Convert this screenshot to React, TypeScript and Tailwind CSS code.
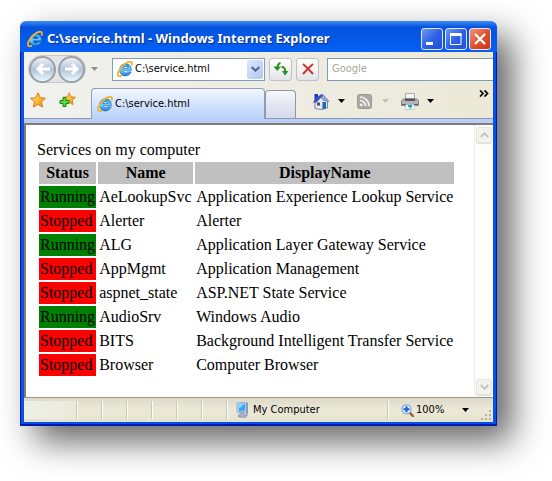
import type { ReactNode } from 'react';

type Service = { status: 'Running' | 'Stopped'; name: string; display: string };

const services: Service[] = [
  { status: 'Running', name: 'AeLookupSvc', display: 'Application Experience Lookup Service' },
  { status: 'Stopped', name: 'Alerter', display: 'Alerter' },
  { status: 'Running', name: 'ALG', display: 'Application Layer Gateway Service' },
  { status: 'Stopped', name: 'AppMgmt', display: 'Application Management' },
  { status: 'Stopped', name: 'aspnet_state', display: 'ASP.NET State Service' },
  { status: 'Running', name: 'AudioSrv', display: 'Windows Audio' },
  { status: 'Stopped', name: 'BITS', display: 'Background Intelligent Transfer Service' },
  { status: 'Stopped', name: 'Browser', display: 'Computer Browser' },
];

function IeLogo() {
  return (
    <svg className="size-4 shrink-0" viewBox="0 0 16 16" aria-hidden="true">
      <defs>
        <linearGradient id="ie" x1="0" y1="0" x2="0" y2="1">
          <stop offset="0" stopColor="#2f93e6" />
          <stop offset=".55" stopColor="#6fd0fb" />
          <stop offset="1" stopColor="#1d78d4" />
        </linearGradient>
      </defs>
      <path
        d="M14.400 9.800H6.300c.1 1.400 1 2.100 2.300 2.100.9 0 1.600-.3 2-.9h3.500c-.7 2.300-2.800 3.900-5.600 3.900-3.500 0-5.900-2.500-5.900-6 0-3.500 2.500-6.100 6-6.100 3.600 0 5.900 2.600 5.800 7zM6.300 7.400h4.600C10.700 6.200 9.900 5.500 8.600 5.500S6.500 6.200 6.300 7.400z"
        fill="url(#ie)"
        stroke="#1263b8"
        strokeWidth=".6"
      />
      <path
        d="M14.400 4.700c.9-2.100.7-3.600-.6-3.900C11.300.3 6.700 3 3.600 7.300.8 11.100.2 14.500 1.800 15.200c.8.3 1.900 0 3.200-.8"
        fill="none"
        stroke="#f3b32a"
        strokeWidth="1.800"
      />
    </svg>
  );
}

function Arrow({ className }: { className: string }) {
  return (
    <svg className={'h-1 w-[7px] shrink-0 ' + className} viewBox="0 0 7 4" aria-hidden="true">
      <path d="M0 0h7L3.500 4z" fill="currentColor" />
    </svg>
  );
}

function NavButton({ label, path }: { label: string; path: string }) {
  return (
    <button aria-label={label} className="flex size-[27px] items-center justify-center rounded-full border-2 border-[#9aa0a8] bg-linear-to-b from-[#eef2f6] via-[#b4c4d6] to-[#e9f8ff]">
      <svg className="h-3.5 w-4 shrink-0" viewBox="0 0 16 14" fill="none" stroke="#fff" strokeWidth="3" aria-hidden="true">
        <path d={path} />
      </svg>
    </button>
  );
}

function NavButtons() {
  return (
    <div className="flex h-7 w-[58px] shrink-0 items-center justify-between rounded-full border border-[#c9c9c9] bg-[#e3e4e5]">
      <NavButton label="Back" path="M15 7H3M8 2 3 7 8 12" />
      <NavButton label="Forward" path="M1 7h12M8 2 13 7 8 12" />
    </div>
  );
}

function CaptionButton({ label, tone, children }: { label: string; tone: string; children: ReactNode }) {
  return (
    <button aria-label={label} className={'size-[22px] rounded-[3px] border border-[#dfe7fb] ' + tone}>
      <svg className="size-5" viewBox="0 0 20 20" fill="none" aria-hidden="true">
        {children}
      </svg>
    </button>
  );
}

function ToolButton({ label, children }: { label: string; children: ReactNode }) {
  return (
    <button aria-label={label} className="flex size-[23px] shrink-0 items-center justify-center rounded-[3px] border border-[#bdbfca] bg-linear-to-b from-white via-[#f4f3f0] to-[#e2e2ea]">
      {children}
    </button>
  );
}

const starPath = 'M8 .8l2.200 4.900 5.200.6-3.900 3.500 1.100 5.200L8 12.400 3.400 15l1.100-5.200L.6 6.300l5.200-.6z';

function Star({ plus }: { plus?: boolean }) {
  return (
    <svg className="h-4 w-[17px]" viewBox="0 0 17 16" aria-hidden="true">
      <defs>
        <linearGradient id="star" x1="0" y1="0" x2="1" y2="1">
          <stop offset="0" stopColor="#fff0a0" />
          <stop offset=".5" stopColor="#fdbb35" />
          <stop offset="1" stopColor="#f08a10" />
        </linearGradient>
      </defs>
      <path
        d={starPath}
        fill="url(#star)"
        stroke="#cf7c18"
        strokeLinejoin="round"
        transform={plus ? 'translate(3.500 0) scale(.84)' : undefined}
      />
      {plus && (
        <path d="M4 5.500h3V8.500h3v3H7v3H4v-3H1v-3h3z" fill="#5ad83a" stroke="#16880f" strokeLinejoin="round" />
      )}
    </svg>
  );
}

function HomeIcon() {
  return (
    <svg className="h-[17px] w-[18px]" viewBox="0 0 18 17" aria-hidden="true">
      <path d="M3 8v7.500l6 1 6.500-1.500V8L11 3z" fill="#e6e9f2" stroke="#7d86a3" />
      <path d="M2.500 1h3.500V4L2.500 8z" fill="#2437b8" />
      <path d="M11 1.500 17 8.500 11.500 7.500 9 4z" fill="#9aa9cc" stroke="#6677a8" strokeWidth=".7" />
      <path d="M.8 9.500 5 4 9.500 1 11 2.500 4.500 9.500z" fill="#3a52c4" />
      <path d="M10.500 9h3.500v6.500l-3.500.7z" fill="#1967b7" />
      <path d="M5 9.500h3v3H5z" fill="#4b5058" />
    </svg>
  );
}

function FeedIcon() {
  return (
    <svg className="h-[15px] w-[15px]" viewBox="0 0 15 15" aria-hidden="true">
      <rect x=".5" y=".5" width="14" height="14" rx="2" fill="#aaa9a5" stroke="#989793" />
      <g fill="none" stroke="#f5f4ef" strokeWidth="1.600">
        <path d="M3 6.500A5.500 5.500 0 0 1 8.500 12M3 3a9 9 0 0 1 9 9" />
      </g>
      <circle cx="4.300" cy="10.800" r="1.400" fill="#f5f4ef" />
    </svg>
  );
}

function PrinterIcon() {
  return (
    <svg className="h-[17px] w-[18px]" viewBox="0 0 18 17" aria-hidden="true">
      <path d="M4.500.5h9V7h-9z" fill="#f4f4f4" stroke="#aaa" />
      <path d="M2 6h14l1.500 2v4.500H.5V8z" fill="#b3b5b9" stroke="#85878c" />
      <path d="M4 5.500h10v2.500H4z" fill="#54565c" />
      <path d="M1 11.500h16" stroke="#63656a" />
      <path d="M5 11.500h8l.5 5h-9z" fill="#f6fafd" stroke="#b4bec8" strokeWidth=".7" />
      <path d="M7 12h4v2H7z" fill="#259bdc" />
      <path d="M8.500 14h2v1.500h-2z" fill="#4db36b" />
    </svg>
  );
}

function ComputerIcon() {
  return (
    <svg className="h-4 w-[13px]" viewBox="0 0 13 16" aria-hidden="true">
      <path d="M10 1.500 12 .5v11l-2 1.500z" fill="#8a96bb" />
      <path d="M1 1 10.500 0v9.500L2.500 11 1 10z" fill="#cfdcf4" stroke="#7795cf" strokeWidth=".7" />
      <path d="M2.200 2 9.300 1.200v7.300L2.800 9.700z" fill="#3ca6f3" />
      <path d="M2.200 2 9.300 1.200 2.600 7z" fill="#8bd4fc" />
      <path d="m5 10.500 3-.5v2.500l3.500.5-2 2.500-7-.5v-2l2.500-.5z" fill="#aab1cb" stroke="#7d84a6" strokeWidth=".6" />
    </svg>
  );
}

function MagnifierIcon() {
  return (
    <svg className="size-[13px]" viewBox="0 0 13 13" aria-hidden="true">
      <path d="m8 8 4 4" stroke="#9a5636" strokeWidth="2.400" strokeLinecap="round" />
      <circle cx="5.500" cy="5.300" r="4.600" fill="#dbeeff" stroke="#8ba8d2" strokeWidth="1.200" />
      <path d="M5.500 2.300v6M2.500 5.300h6" stroke="#1261d4" strokeWidth="2" />
    </svg>
  );
}

function ScrollButton({ up }: { up?: boolean }) {
  return (
    <button aria-label={up ? 'Scroll up' : 'Scroll down'} className="flex size-4 shrink-0 items-center justify-center rounded-[3px] border border-[#e6e5df] bg-[#f3f2ee] shadow-[0_1px_1px_#dcdcd2]">
      <svg className="h-1.5 w-[9px]" viewBox="0 0 9 6" fill="none" stroke="#c4c3bd" strokeWidth="2" aria-hidden="true">
        <path d={up ? 'M.7 5 4.500 1.300 8.300 5' : 'M.7 1l3.800 3.700L8.300 1'} />
      </svg>
    </button>
  );
}

function TitleBar() {
  return (
    <header className="flex h-[31px] items-center rounded-t-[6px] bg-linear-to-b from-[#3c8cf5] from-0% via-[#0553dd] via-20% to-[#0560f4] pt-1 pr-1.5 pl-[7px]">
      <IeLogo />
      <h1 className="ml-1 flex-1 truncate font-['Noto_Sans',sans-serif] text-[13px] font-bold text-white [text-shadow:1px_1px_1px_#0a2d8c]">
        C:\service.html - Windows Internet Explorer
      </h1>
      <div className="flex gap-0.5">
        <CaptionButton label="Minimize" tone="bg-linear-to-br from-[#6f98f3] via-[#2f62e4] to-[#1c4fd8]">
          <path d="M4 14.500h7" stroke="#fff" strokeWidth="3" />
        </CaptionButton>
        <CaptionButton label="Maximize" tone="bg-linear-to-br from-[#6f98f3] via-[#2f62e4] to-[#1c4fd8]">
          <path d="M4.500 5v10.500h10.500V5z" stroke="#fff" />
          <path d="M4 5.500h11.500" stroke="#fff" strokeWidth="3" />
        </CaptionButton>
        <CaptionButton label="Close" tone="bg-linear-to-br from-[#ee9376] via-[#e2512f] to-[#cb3410]">
          <path d="m5 5 10 10M15 5 5 15" stroke="#fff" strokeWidth="2.400" />
        </CaptionButton>
      </div>
    </header>
  );
}

function NavigationBar() {
  return (
    <div className="flex h-[34px] items-center pl-1">
      <NavButtons />
      <Arrow className="ml-[5px] text-[#8f8f8f]" />
      <div className="ml-3.5 flex h-[23px] w-[153px] shrink-0 items-center border border-[#7f9db9] bg-white pl-1">
        <IeLogo />
        <input aria-label="Address" defaultValue="C:\service.html" className="ml-0.5 h-5 w-0 flex-1 bg-transparent leading-5 outline-none" />
        <button aria-label="Show addresses" className="m-px flex h-[19px] w-4 items-center justify-center rounded-[2px] bg-linear-to-br from-[#dce7fd] to-[#b0c8f5]">
          <svg className="h-1.5 w-[9px]" viewBox="0 0 9 6" fill="none" stroke="#4d6185" strokeWidth="2" aria-hidden="true">
            <path d="m.7 1 3.800 3.700L8.300 1" />
          </svg>
        </button>
      </div>
      <div className="mx-1 flex gap-1">
        <ToolButton label="Refresh">
          <svg className="h-3.5 w-4" viewBox="0 0 16 14" fill="none" stroke="#279222" strokeWidth="2" aria-hidden="true">
            <path d="M7.500 1C5.500 1.500 4.500 3 4.500 6M8.500 5c2.500-.3 3.500 1.500 3.500 3v4.500" />
            <path d="M.5 4.500h7.500L4.300 9zM9 9h6.500l-3.500 4.500z" fill="#279222" stroke="none" />
          </svg>
        </ToolButton>
        <ToolButton label="Stop">
          <svg className="size-3" viewBox="0 0 12 12" fill="none" stroke="#cf3434" strokeWidth="2" aria-hidden="true">
            <path d="M1 1c3 2.500 7 6.500 10 10M11 1C8 3.500 4 7.500 1 11" />
          </svg>
        </ToolButton>
      </div>
      <div className="ml-1 flex h-[23px] flex-1 items-center border-y border-l border-[#7f9db9] bg-white pl-1">
        <input aria-label="Search" placeholder="Google" className="h-5 w-0 flex-1 bg-transparent leading-5 outline-none placeholder:text-[#aaa899]" />
      </div>
    </div>
  );
}

function TabBar() {
  return (
    <div className="flex h-[33px] border-b border-[#8f9aaa] pl-1.5">
      <div className="flex w-[61px] shrink-0 items-center gap-3 pb-1">
        <button aria-label="Favorites"><Star /></button>
        <button aria-label="Add to favorites"><Star plus /></button>
      </div>
      <div className="flex items-end" role="tablist">
        <button role="tab" aria-selected="true" className="-mb-px flex h-[31px] w-[174px] items-center rounded-t-[4px] border border-b-0 border-[#8f9db8] bg-linear-to-b from-[#f2f7ff] via-[#d3e3fc] to-[#b9d1fa] pl-[5px]">
          <IeLogo />
          <span className="ml-0.5">C:\service.html</span>
        </button>
        <button aria-label="New tab" role="tab" aria-selected="false" className="h-7 w-[31px] rounded-t-[4px] border border-b-0 border-[#9296a8] bg-linear-to-b from-[#f8f8fb] via-[#e3e6f1] to-[#d5daeb]" />
      </div>
      <div className="ml-4 flex flex-1 items-center pb-0.5">
        <button aria-label="Home" className="flex items-center gap-2"><HomeIcon /><Arrow className="text-black" /></button>
        <button aria-label="Feeds" className="ml-3 flex items-center gap-2.5"><FeedIcon /><Arrow className="text-[#c5c2b5]" /></button>
        <button aria-label="Print" className="ml-3 flex items-center gap-2"><PrinterIcon /><Arrow className="text-black" /></button>
        <button aria-label="More tools" className="mr-1 mb-4 ml-auto">
          <svg className="h-[7px] w-[10px]" viewBox="0 0 10 7" fill="none" stroke="#000" strokeWidth="1.700" aria-hidden="true">
            <path d="m1 .5 3 3-3 3M5.500.5l3 3-3 3" />
          </svg>
        </button>
      </div>
    </div>
  );
}

function StatusBar() {
  return (
    <footer className="flex h-[25px] items-center border-t border-[#98968a] bg-linear-to-b from-[#dedac9] via-[#ece9d8] to-[#e6e2ce]">
      <div className="h-[18px] w-[53px] shrink-0 border-r border-[#c9c6b6] bg-linear-to-r from-[#edefe9] to-[#ece9d8]" />
      {[0, 1, 2, 3, 4, 5].map((n) => (
        <div key={n} className="h-[18px] w-[25px] shrink-0 border-r border-l border-r-[#c9c6b6] border-l-white" />
      ))}
      <div className="flex h-[18px] flex-1 items-center border-r border-l border-r-[#c9c6b6] border-l-white pl-2">
        <ComputerIcon />
        <span className="ml-1 whitespace-nowrap">My Computer</span>
      </div>
      <button className="flex h-[18px] w-[81px] shrink-0 items-center border-l border-white pl-3">
        <MagnifierIcon />
        <span className="ml-0.5">100%</span>
        <Arrow className="ml-auto text-black" />
      </button>
      <span className="w-3 shrink-0" />
      <svg className="mr-px mb-px size-[11px] shrink-0 self-end" viewBox="0 0 11 11" fill="#b5b2a0" aria-hidden="true">
        <path d="M8 0h2v2H8zM8 4h2v2H8zM8 8h2v2H8zM4 4h2v2H4zM4 8h2v2H4zM0 8h2v2H0z" />
      </svg>
    </footer>
  );
}

export default function App() {
  return (
    <div className="bg-white pt-[21px] pr-[55px] pb-[55px] pl-5">
      <div className="rounded-t-[6px] font-['DejaVu_Sans_Condensed','DejaVu_Sans',sans-serif] text-[11px] text-black shadow-[15px_15px_34px_rgba(0,0,0,0.62)]">
        <TitleBar />
        <div className="border-x border-b-2 border-[#0019ac]">
          <div className="border-x-3 border-b-2 border-[#0550e8] bg-[#ece9d8]">
            <div className="bg-linear-to-r from-[#f1f1ee] to-[#ece9d8]">
              <NavigationBar />
              <TabBar />
            </div>
            <div className="h-1 bg-[#b9cdf8]" />
            <main className="flex border-t-2 border-l-2 border-[#817f73] bg-white">
              <div className="flex-1 pt-[15px] pb-[19px] pl-[11px] font-['Liberation_Serif',serif] text-[16px] leading-5">
                <p>Services on my computer</p>
                <table className="border-separate border-spacing-0.5 whitespace-nowrap">
                  <thead>
                    <tr className="bg-[#c0c0c0]">
                      <th className="h-[22px] min-w-[57px] p-px">Status</th>
                      <th className="min-w-[95px] p-px">Name</th>
                      <th className="min-w-[254px] p-px">DisplayName</th>
                    </tr>
                  </thead>
                  <tbody>
                    {services.map((s) => (
                      <tr key={s.name}>
                        <td className={'h-[22px] p-px ' + (s.status === 'Running' ? 'bg-[#008000]' : 'bg-[#ff0000]')}>{s.status}</td>
                        <td className="p-px">{s.name}</td>
                        <td className="p-px">{s.display}</td>
                      </tr>
                    ))}
                  </tbody>
                </table>
              </div>
              <div className="flex w-[19px] shrink-0 flex-col items-center justify-between border-l border-[#eeeee6] bg-[#fdfdfa] py-0.5">
                <ScrollButton up />
                <ScrollButton />
              </div>
            </main>
            <StatusBar />
          </div>
        </div>
      </div>
    </div>
  );
}
